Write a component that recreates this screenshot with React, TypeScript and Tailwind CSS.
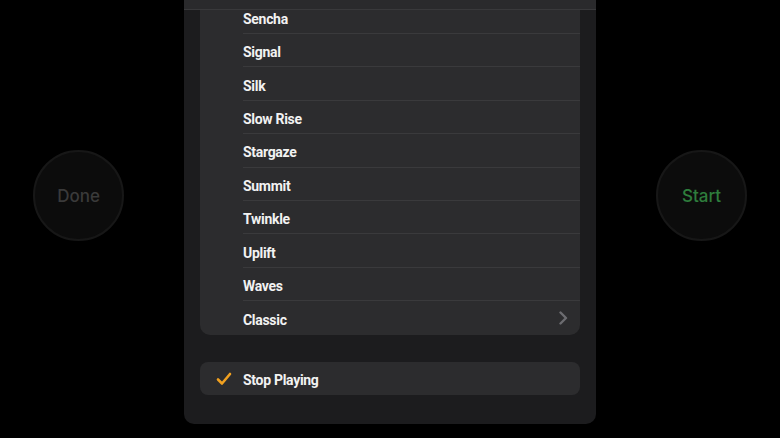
const tones = [
  "Sencha",
  "Signal",
  "Silk",
  "Slow Rise",
  "Stargaze",
  "Summit",
  "Twinkle",
  "Uplift",
  "Waves",
];

function CircleButton({ label, tone }: { label: string; tone: string }) {
  return (
    <div className="mt-[150px] flex h-[91px] w-[91px] shrink-0 items-center justify-center rounded-full border-2 border-[#171717] bg-[#0c0c0c]">
      <span className={`pt-[2px] text-[17px] font-medium ${tone}`}>{label}</span>
    </div>
  );
}

export default function App() {
  return (
    <div
      className="flex h-[438px] w-[780px] items-start overflow-hidden bg-black pl-[33px]"
      style={{ fontFamily: "Inter, 'Liberation Sans', sans-serif" }}
    >
      <CircleButton label="Done" tone="text-[#3a3a3a]" />

      <div
        className="relative ml-[60px] mr-[60px] flex h-[424px] w-[412px] shrink-0 flex-col overflow-hidden rounded-b-[10px] bg-[#1c1c1e] px-4"
        style={{ fontFamily: "Roboto, Inter, sans-serif" }}
      >
        <div className="absolute inset-x-0 top-0 h-[10px] border-b border-[#39393b] bg-[#2a2a2c]" />

        <div className="mt-[0.6px] rounded-b-[10px] bg-[#2c2c2e]">
          {tones.map((name) => (
            <div key={name} className="flex h-[33.4px] items-center pl-[43px] pt-[5px]">
              <div className="flex h-full w-full items-center border-b border-[#3a3a3c] text-[14px] font-bold tracking-[-0.3px] text-[#f2f2f2]">
                {name}
              </div>
            </div>
          ))}
          <div className="flex h-[33.4px] items-center pl-[43px] pr-3 pt-[5px]">
            <span className="flex-1 text-[14px] font-bold tracking-[-0.3px] text-[#f2f2f2]">Classic</span>
            <svg width="10" height="14" viewBox="0 0 10 14" fill="none" className="-mt-[4px]">
              <path d="M2.5 1.5 L8 7 L2.5 12.5" stroke="#6c6c70" strokeWidth="2.4" strokeLinecap="round" strokeLinejoin="round" />
            </svg>
          </div>
        </div>

        <div className="mt-[27.6px] flex h-[33px] items-center rounded-[8px] bg-[#2c2c2e] pt-[4px]">
          <div className="-mt-[4px] flex w-[43px] justify-center pl-[4px]">
            <svg width="16" height="14" viewBox="0 0 16 14" fill="none">
              <path d="M2 7.5 L6 11.5 L14 2" stroke="#f0a020" strokeWidth="2.6" strokeLinecap="round" strokeLinejoin="round" />
            </svg>
          </div>
          <span className="text-[14px] font-bold tracking-[-0.3px] text-[#f2f2f2]">Stop Playing</span>
        </div>
      </div>

      <CircleButton label="Start" tone="text-[#2e7d3c]" />
    </div>
  );
}
